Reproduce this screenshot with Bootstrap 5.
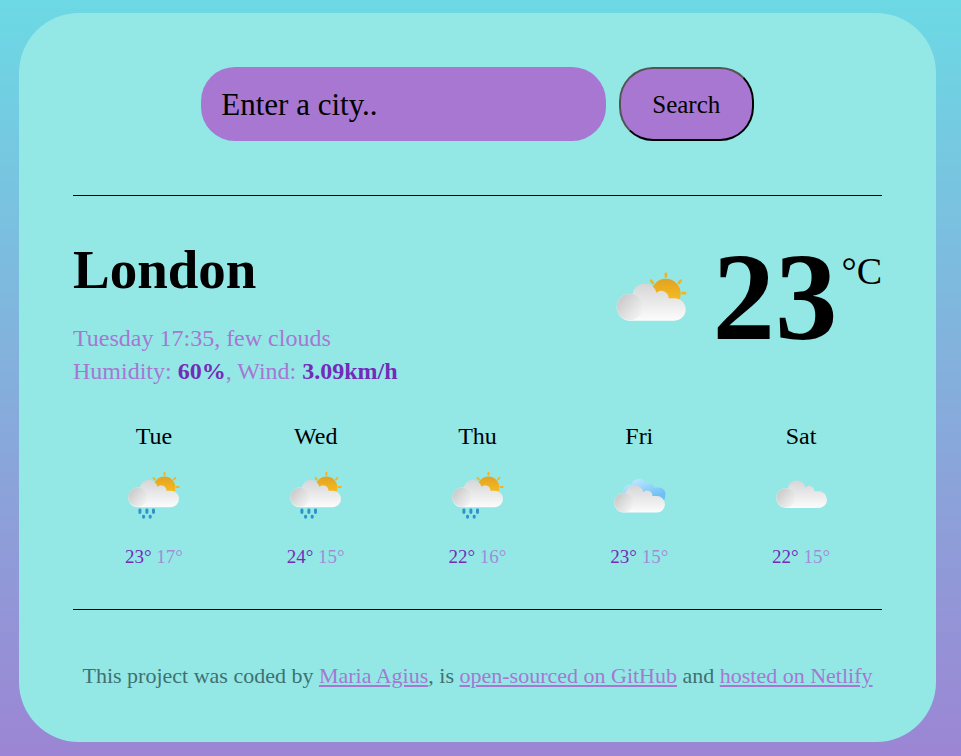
<!DOCTYPE html>
<html lang="en">
<head>
<meta charset="utf-8">
<meta name="viewport" content="width=device-width, initial-scale=1">
<title>Weather</title>
<link href="https://cdn.jsdelivr.net/npm/bootstrap@5.3.0/dist/css/bootstrap.min.css" rel="stylesheet">
<style>
body{font-family:"Liberation Serif",serif;color:#000;min-height:100vh;padding:13px 25px 14px 19px;background:linear-gradient(#6cd9e4,#9c85d4) no-repeat}
.weather-panel{background:#93e8e6;border-radius:60px;padding:54px}
.search-form{gap:13px;margin-bottom:54px}
.city-input{width:50%;height:74px;padding:2px 20px 0;border:0;border-radius:34px;background:#a777d2;color:#000;font-size:31px}
.city-input::placeholder{color:#000;opacity:1}
.search-btn{width:135px;height:74px;padding:2px 0 0;border:2px outset #000;border-radius:34px;background:#a777d2;color:#000;font-size:25px}
.divider{height:1px;border:0;margin:0;background:#000;opacity:1}
.current{margin-top:44px}
.city-name{font-size:55px;line-height:60px;font-weight:700;margin:0 0 22px}
.details{font-size:24px;line-height:33px;color:#a777d2}
.details strong{color:#732bb8}
.current-icon{width:72px;height:68px;margin:30px 25px 0 0}
.degrees{font-size:125px;line-height:114px;font-weight:700}
.unit{font-size:38px;line-height:62px;margin-left:4px}
.forecast{margin:32px 0 40px}
.day-name{font-size:24px;line-height:33px;margin-bottom:17px}
.day-icon{width:53px;height:50px;margin-bottom:25px}
.day-temp{font-size:19px;line-height:24px;color:#a38bd8}
.day-max{color:#732bb8}
.credits{margin-top:54px;font-size:22px;line-height:24px;color:#40706f}
.credits a{color:#a777d2}
</style>
<script src="https://cdn.jsdelivr.net/npm/bootstrap@5.3.0/dist/js/bootstrap.bundle.min.js" defer></script>
</head>
<body>
<svg class="position-absolute" width="0" height="0" aria-hidden="true">
<defs>
<linearGradient id="cloudFill" gradientUnits="userSpaceOnUse" x1="0" y1="30" x2="0" y2="112"><stop offset="0" stop-color="#d6d6d8"/><stop offset="1" stop-color="#fcfcfc"/></linearGradient>
<linearGradient id="puffFill" x1="0.1" y1="0.15" x2="0.9" y2="0.85"><stop offset="0" stop-color="#c9c9ca"/><stop offset="1" stop-color="#f3f3f3"/></linearGradient>
<linearGradient id="sunFill" x1="0" y1="0" x2="0" y2="1"><stop offset="0" stop-color="#e2a223"/><stop offset="1" stop-color="#fcc61d"/></linearGradient>
<linearGradient id="blueFill" gradientUnits="userSpaceOnUse" x1="70" y1="24" x2="100" y2="94"><stop offset="0" stop-color="#c0e7ff"/><stop offset="1" stop-color="#6dbff5"/></linearGradient>
<symbol id="cloud" viewBox="0 0 160 150">
<path d="M33 112A30 30 0 1 1 39 52.500A27 27 0 0 1 92 50A16 16 0 0 1 119 62H132A25 25 0 0 1 132 112Z" fill="url(#cloudFill)"/>
<circle cx="33" cy="82" r="29" fill="url(#puffFill)"/>
</symbol>
<symbol id="sun" viewBox="0 0 160 150">
<circle cx="113" cy="52" r="33" fill="url(#sunFill)"/>
<path d="M113 8v6M80 23l4 5M146 23l-4 5M150 51h6" stroke="#f3b325" stroke-width="6" stroke-linecap="round"/>
</symbol>
<symbol id="few-clouds" viewBox="0 0 160 150"><use href="#sun" width="160" height="150"/><use href="#cloud" width="160" height="150"/></symbol>
<symbol id="rain" viewBox="0 0 160 150">
<use href="#few-clouds" width="160" height="150"/>
<path d="M39 120v8M60 120v8M80 120v8M50 139v3M70 139v3" stroke="#2f92cb" stroke-width="9" stroke-linecap="round"/>
</symbol>
<symbol id="broken" viewBox="0 0 160 150">
<path d="M46 86A20 20 0 0 1 56 44A24 24 0 0 1 102 43A14 14 0 0 1 124 52H140A19 19 0 0 1 158 74Q158 84 154 92Z" fill="url(#blueFill)"/>
<use href="#cloud" y="16" width="160" height="150"/>
</symbol>
<symbol id="overcast" viewBox="0 0 160 150"><use href="#cloud" y="2" width="160" height="150"/></symbol>
</defs>
</svg>
<main class="weather-panel">
<form class="search-form d-flex justify-content-center" onsubmit="return false">
<input class="city-input" type="search" placeholder="Enter a city.." aria-label="City">
<button class="search-btn" type="submit">Search</button>
</form>
<hr class="divider">
<section class="current d-flex justify-content-between">
<div>
<h1 class="city-name">London</h1>
<div class="details">
<div>Tuesday 17:35, few clouds</div>
<div>Humidity: <strong>60%</strong>, Wind: <strong>3.09km/h</strong></div>
</div>
</div>
<div class="d-flex align-items-start">
<svg class="current-icon" role="img" aria-label="Few clouds"><use href="#few-clouds"/></svg>
<span class="degrees">23</span><span class="unit">°C</span>
</div>
</section>
<section class="forecast row g-0 text-center">
<div class="col"><div class="day-name">Tue</div><svg class="day-icon d-block mx-auto" role="img" aria-label="Rain"><use href="#rain"/></svg><div class="day-temp"><span class="day-max">23°</span> 17°</div></div>
<div class="col"><div class="day-name">Wed</div><svg class="day-icon d-block mx-auto" role="img" aria-label="Rain"><use href="#rain"/></svg><div class="day-temp"><span class="day-max">24°</span> 15°</div></div>
<div class="col"><div class="day-name">Thu</div><svg class="day-icon d-block mx-auto" role="img" aria-label="Rain"><use href="#rain"/></svg><div class="day-temp"><span class="day-max">22°</span> 16°</div></div>
<div class="col"><div class="day-name">Fri</div><svg class="day-icon d-block mx-auto" role="img" aria-label="Broken clouds"><use href="#broken"/></svg><div class="day-temp"><span class="day-max">23°</span> 15°</div></div>
<div class="col"><div class="day-name">Sat</div><svg class="day-icon d-block mx-auto" role="img" aria-label="Cloudy"><use href="#overcast"/></svg><div class="day-temp"><span class="day-max">22°</span> 15°</div></div>
</section>
<hr class="divider">
<footer class="credits text-center">This project was coded by <a href="#">Maria Agius</a>, is <a href="#">open-sourced on GitHub</a> and <a href="#">hosted on Netlify</a></footer>
</main>
</body>
</html>
